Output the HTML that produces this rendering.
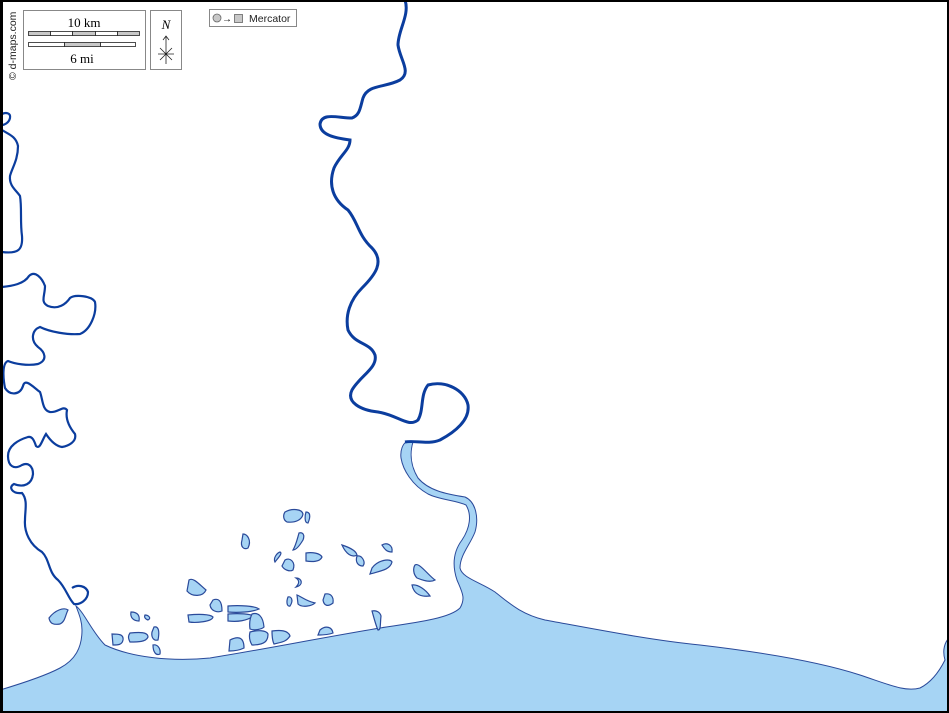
<!DOCTYPE html>
<html><head><meta charset="utf-8"><style>
html,body{margin:0;padding:0;background:#fff}
svg{display:block}
</style></head><body>
<svg width="949" height="713" viewBox="0 0 949 713" xmlns="http://www.w3.org/2000/svg">
<rect x="0" y="0" width="949" height="713" fill="#fff"/>
<!-- sea -->
<path d="M0,690 C20,684 45,676 60,668 C75,660 82,648 82,630 C82,620 78,612 76,606 C84,612 92,632 105,645 C130,657 170,662 210,658 C260,650 320,638 380,628 C420,622 450,618 460,608 C466,598 462,592 457,580 C452,565 453,552 462,540 C470,528 472,515 466,505 C455,500 440,500 428,494 C412,485 403,470 401,458 C400,450 403,444 406,442 L413,442 C410,452 410,465 418,478 C428,490 445,494 465,497 C476,502 479,518 475,532 C470,545 460,555 460,568 C462,578 480,582 495,592 C508,602 520,614 545,620 C600,630 650,640 700,645 C760,652 820,662 860,675 C890,685 905,692 920,688 C932,682 940,670 945,660 C942,650 945,642 949,638 L949,713 L0,713 Z" fill="#a6d4f4" stroke="#2a4a9a" stroke-width="1"/>
<!-- main river -->
<path d="M405,0 C410,15 398,30 398,45 C400,60 412,72 400,80 C385,88 368,84 363,98 C360,108 360,115 352,118 C338,118 322,112 320,124 C320,135 335,138 350,140 C350,150 340,155 334,168 C328,185 333,200 348,210 C358,222 358,235 372,248 C385,262 375,275 362,288 C350,300 345,315 348,330 C355,345 370,342 375,355 C378,368 360,376 352,390 C346,402 360,410 378,412 C398,415 408,428 418,420 C424,410 420,395 428,385 C445,380 465,390 468,405 C470,420 455,432 440,440 C428,445 415,440 405,442" fill="none" stroke="#0b3d9e" stroke-width="3"/>
<!-- left rivers -->
<g fill="none" stroke="#0b3d9e" stroke-width="2.2">
<path d="M2,114 C6,112 11,113 10,118 C9,123 4,125 2,125"/>
<path d="M2,130 C8,134 16,136 18,146 C18,160 12,168 10,176 C9,186 16,190 20,196 C22,208 20,222 22,236 C23,250 18,254 2,252"/>
<path d="M2,287 C12,286 24,284 29,276 C35,270 42,278 45,286 C45,296 40,302 48,306 C58,310 66,304 70,298 C75,294 92,296 95,302 C97,314 90,330 80,334 C68,335 50,332 40,327 C32,330 30,340 38,347 C45,352 48,360 38,364 C28,366 15,364 8,361 C2,363 3,378 5,388 C10,396 20,395 23,386 C25,378 32,386 40,392 C43,400 42,410 50,412 C58,413 63,405 67,410 C65,420 70,428 75,434 C77,442 68,446 62,447 C55,446 50,440 46,434 C42,440 40,450 36,446 C34,440 32,436 28,437 C18,440 8,446 8,456 C8,466 14,470 22,465 C28,462 33,466 33,474 C32,484 24,488 14,484 C8,487 12,494 22,493 C28,500 25,510 25,520 C24,532 30,545 42,552 C50,560 48,572 58,580 C66,588 68,598 74,604 C80,605 88,600 88,592 C86,586 78,584 72,588"/>
</g>
<!-- islands -->
<g fill="#a6d4f4" stroke="#2a4a9a" stroke-width="1.2">
<path d="M285,512 C292,508 302,509 303,514 C302,520 295,523 287,522 C283,520 283,515 285,512Z"/>
<path d="M306,512 C310,512 311,516 308,523 C304,523 305,515 306,512Z"/>
<path d="M243,534 C247,534 252,540 248,548 C244,550 240,547 242,540Z"/>
<path d="M299,533 C303,532 305,535 303,540 C300,545 296,550 293,550 C296,545 297,540 299,533Z"/>
<path d="M306,553 C312,552 320,553 322,557 C320,562 312,562 306,561Z"/>
<path d="M280,552 C283,553 278,558 275,562 C273,558 277,553 280,552Z"/>
<path d="M285,560 C290,557 296,562 293,570 C290,572 284,570 282,566Z"/>
<path d="M296,578 C302,578 304,585 296,587 C300,583 299,580 296,578Z"/>
<path d="M342,545 C348,547 356,550 357,555 C352,558 346,554 342,545Z"/>
<path d="M357,556 C362,555 366,562 363,566 C358,566 355,562 357,556Z"/>
<path d="M382,545 C387,542 393,545 392,552 C386,552 384,548 382,545Z"/>
<path d="M372,568 C378,560 390,558 392,562 C390,570 380,571 370,574Z"/>
<path d="M415,565 C419,562 428,575 435,580 C430,583 422,580 417,578 C413,574 413,568 415,565Z"/>
<path d="M412,585 C418,584 426,590 430,596 C422,597 414,595 412,585Z"/>
<path d="M189,580 C193,577 199,584 206,590 C203,597 192,597 187,591Z"/>
<path d="M213,600 C218,598 222,600 222,611 C217,613 211,611 210,605Z"/>
<path d="M188,615 C198,614 210,614 213,617 C212,622 195,623 189,622Z"/>
<path d="M228,606 C240,605 255,606 259,609 C252,612 238,613 228,612Z"/>
<path d="M228,614 C240,613 250,614 254,616 C246,621 238,622 228,621Z"/>
<path d="M252,614 C258,612 263,616 264,627 C262,629 255,631 250,629 C249,622 250,618 252,614Z"/>
<path d="M250,632 C258,630 266,630 268,634 C268,640 266,645 252,645 C249,640 249,636 250,632Z"/>
<path d="M272,631 C280,630 288,630 290,636 C286,642 282,642 274,644 C272,640 272,635 272,631Z"/>
<path d="M230,640 C236,637 244,635 244,648 C240,650 234,651 229,651Z"/>
<path d="M288,597 C291,596 294,600 290,606 C287,607 286,602 288,597Z"/>
<path d="M297,595 C302,597 306,601 315,603 C312,606 302,608 298,604Z"/>
<path d="M325,594 C330,593 334,596 333,603 C328,607 324,606 323,600Z"/>
<path d="M131,612 C138,612 140,616 139,621 C133,621 130,617 131,612Z"/>
<path d="M145,615 C148,615 152,618 148,620 C145,619 144,617 145,615Z"/>
<path d="M112,634 C118,634 124,634 123,640 C122,645 118,645 113,645Z"/>
<path d="M130,633 C140,632 148,632 148,637 C146,642 138,642 130,642 C128,638 128,636 130,633Z"/>
<path d="M154,627 C158,626 160,630 158,640 C154,641 151,638 152,632Z"/>
<path d="M153,645 C157,644 161,648 160,654 C156,656 153,652 153,645Z"/>
<path d="M49,618 C55,610 64,607 68,610 C65,616 65,622 60,624 C54,625 50,624 49,618Z"/>
<path d="M320,630 C326,625 332,627 333,633 C328,635 322,635 318,635Z"/>
<path d="M372,611 C376,610 380,612 381,616 C380,625 381,630 378,630 C376,626 374,618 372,611Z"/>
</g>
<!-- scale box -->
<rect x="23.5" y="10.5" width="122" height="59" fill="#fff" stroke="#888" stroke-width="1"/>
<text x="84" y="27" font-family="Liberation Serif, serif" font-size="13" text-anchor="middle">10 km</text>
<g stroke="#222" stroke-width="0.8">
<rect x="28.5" y="31.5" width="22" height="4" fill="#c8c8c8"/>
<rect x="50.5" y="31.5" width="22" height="4" fill="#fff"/>
<rect x="72.5" y="31.5" width="23" height="4" fill="#c8c8c8"/>
<rect x="95.5" y="31.5" width="22" height="4" fill="#fff"/>
<rect x="117.5" y="31.5" width="22" height="4" fill="#c8c8c8"/>
<rect x="28.5" y="42.5" width="36" height="4" fill="#fff"/>
<rect x="64.5" y="42.5" width="36" height="4" fill="#c8c8c8"/>
<rect x="100.5" y="42.5" width="35" height="4" fill="#fff"/>
</g>
<text x="82" y="63" font-family="Liberation Serif, serif" font-size="13" text-anchor="middle">6 mi</text>
<!-- north -->
<rect x="150.5" y="10.5" width="31" height="59" fill="#fff" stroke="#888" stroke-width="1"/>
<text x="166" y="29" font-family="Liberation Serif, serif" font-size="13" font-style="italic" text-anchor="middle">N</text>
<g stroke="#222" stroke-width="0.8" fill="none">
<path d="M166,36 L166,64 M163,40 L166,36 L169,40 M158,54 L174,54 M160,48 L172,60 M172,48 L160,60"/>
</g>
<!-- mercator -->
<rect x="209.5" y="9.5" width="87" height="17" fill="#fff" stroke="#888" stroke-width="1"/>
<circle cx="217" cy="18" r="4" fill="#c8c8c8" stroke="#666" stroke-width="0.8"/>
<text x="227" y="22" font-family="Liberation Sans, sans-serif" font-size="10" text-anchor="middle">→</text>
<rect x="234.5" y="14.5" width="8" height="8" fill="#c8c8c8" stroke="#666" stroke-width="0.8"/>
<text x="249" y="22" font-family="Liberation Sans, sans-serif" font-size="10.5" fill="#222">Mercator</text>
<!-- credit -->
<text transform="translate(16,80) rotate(-90)" font-family="Liberation Sans, sans-serif" font-size="10.5" fill="#222">© d-maps.com</text>
<!-- frame -->
<rect x="1" y="1" width="947" height="711" fill="none" stroke="#000" stroke-width="2"/>
<rect x="0" y="0" width="3" height="713" fill="#000"/>
</svg>
</body></html>
